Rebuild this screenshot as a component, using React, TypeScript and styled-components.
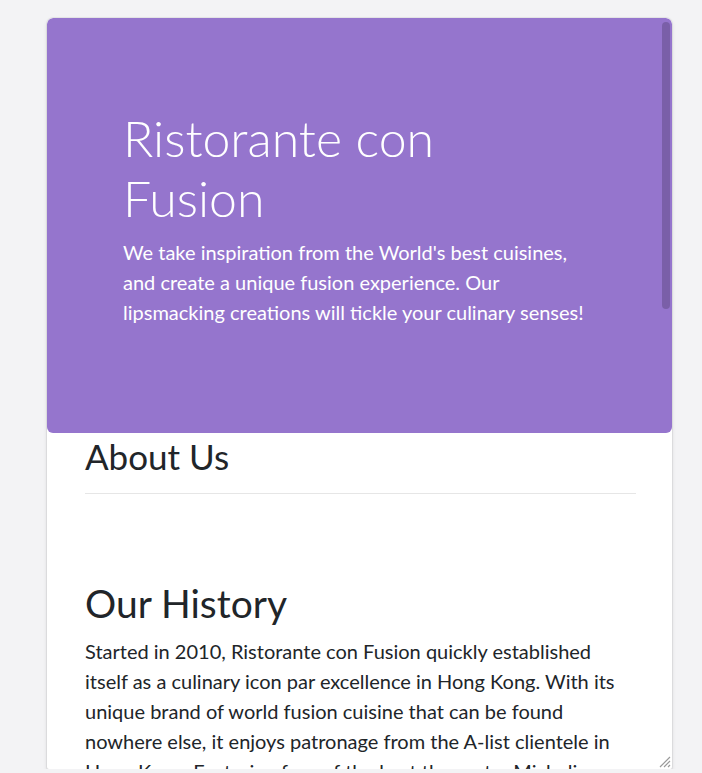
import { createGlobalStyle } from "styled-components";
import styled from "styled-components";

const GlobalStyle = createGlobalStyle`
    html, body {
        margin: 0;
        padding: 0;
        background-color: #f3f3f5;
    }
    body {
        font-family: Lato, "Noto Sans", sans-serif;
        color: #212529;
    }
`;

const heroLines = [
    "We take inspiration from the World's best cuisines,",
    "and create a unique fusion experience. Our",
    "lipsmacking creations will tickle your culinary senses!",
];

const historyLines = [
    "Started in 2010, Ristorante con Fusion quickly established",
    "itself as a culinary icon par excellence in Hong Kong. With its",
    "unique brand of world fusion cuisine that can be found",
    "nowhere else, it enjoys patronage from the A-list clientele in",
    "Hong Kong. Featuring four of the best three-star Michelin",
    "chefs in the world, you never know what will arrive on your",
    "plate the next time you visit us.",
];

export default function App() {
    return (
        <Stage>
            <GlobalStyle />
            <Frame>
                <Hero>
                    <HeroInner>
                        <Title>Ristorante con Fusion</Title>
                        <Lead>
                            {heroLines.map((line) => (
                                <span key={line}>{line}</span>
                            ))}
                        </Lead>
                    </HeroInner>
                </Hero>
                <Section>
                    <Heading $size={35} $top={2}>About Us</Heading>
                    <Rule />
                    <Heading $size={39} $top={86}>Our History</Heading>
                    <Body>
                        {historyLines.map((line) => (
                            <span key={line}>{line}</span>
                        ))}
                    </Body>
                </Section>
                <ScrollThumb />
                <ResizeGrip width="14" height="14" viewBox="0 0 14 14">
                    <path d="M13 3 L3 13 M13 7 L7 13 M13 11 L11 13" stroke="#9a9a9a" strokeWidth="1.2" />
                </ResizeGrip>
            </Frame>
        </Stage>
    );
}

const Stage = styled.div`
    padding: 18px 0 0 47px;
`;

const Frame = styled.div`
    position: relative;
    width: 625px;
    height: 751px;
    overflow: hidden;
    background-color: #ffffff;
    border-radius: 6px 6px 2px 2px;
    box-shadow: 0 0 0 1px rgba(0, 0, 0, 0.05), 0 2px 4px rgba(0, 0, 0, 0.12);
`;

const Hero = styled.div`
    box-sizing: border-box;
    height: 415px;
    padding: 90px 76px 0;
    background-color: #9575cd;
    border-radius: 6px;
    color: #ffffff;
`;

const HeroInner = styled.div`
    width: 480px;
`;

const Title = styled.h1`
    margin: 0 0 9px;
    width: 360px;
    font-size: 50px;
    font-weight: 300;
    line-height: 60px;
`;

const Lead = styled.p`
    margin: 0;
    font-size: 20px;
    font-weight: 400;
    line-height: 30px;
    white-space: nowrap;
    span {
        display: block;
    }
`;

const Section = styled.div`
    padding: 0 36px 0 38px;
`;

const Heading = styled.h2<{ $size: number; $top: number }>`
    margin: ${(p) => p.$top}px 0 0;
    font-size: ${(p) => p.$size}px;
    font-weight: 400;
    line-height: 1.2;
`;

const Rule = styled.hr`
    margin: 16px 0 0;
    border: 0;
    border-top: 1px solid #e6e6e6;
`;

const Body = styled.p`
    margin: 9px 0 0;
    font-size: 20px;
    line-height: 30px;
    white-space: nowrap;
    span {
        display: block;
    }
`;

const ScrollThumb = styled.div`
    position: absolute;
    top: 4px;
    right: 2px;
    width: 8px;
    height: 287px;
    border-radius: 4px;
    background-color: rgba(0, 0, 0, 0.18);
`;

const ResizeGrip = styled.svg`
    position: absolute;
    right: 1px;
    bottom: 1px;
`;
